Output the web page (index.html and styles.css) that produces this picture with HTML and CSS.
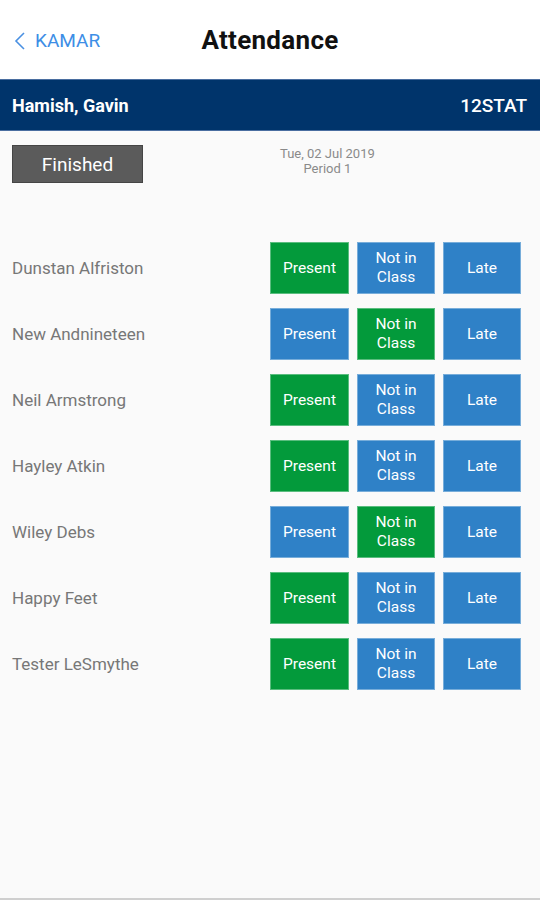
FILE: index.html
```html
<!DOCTYPE html>
<html>
<head>
<meta charset="utf-8">
<link rel="stylesheet" href="styles.css">
</head>
<body>
<div class="app">
  <header class="topbar">
    <a class="back">
      <svg class="chev" width="12" height="20" viewBox="0 0 12 20"><path d="M10 2 L2 10 L10 18" fill="none" stroke="#4a90e2" stroke-width="1.6"/></svg>
      <span>KAMAR</span>
    </a>
    <h1 class="title">Attendance</h1>
  </header>
  <div class="classbar">
    <span class="teacher">Hamish, Gavin</span>
    <span class="code">12STAT</span>
  </div>
  <div class="info">
    <button class="finished">Finished</button>
    <div class="date">
      <div>Tue, 02 Jul 2019</div>
      <div>Period 1</div>
    </div>
  </div>
  <div class="list">
    <div class="row"><span class="name">Dunstan Alfriston</span><div class="btns"><div class="b green">Present</div><div class="b blue">Not in<br>Class</div><div class="b blue">Late</div></div></div>
    <div class="row"><span class="name">New Andnineteen</span><div class="btns"><div class="b blue">Present</div><div class="b green">Not in<br>Class</div><div class="b blue">Late</div></div></div>
    <div class="row"><span class="name">Neil Armstrong</span><div class="btns"><div class="b green">Present</div><div class="b blue">Not in<br>Class</div><div class="b blue">Late</div></div></div>
    <div class="row"><span class="name">Hayley Atkin</span><div class="btns"><div class="b green">Present</div><div class="b blue">Not in<br>Class</div><div class="b blue">Late</div></div></div>
    <div class="row"><span class="name">Wiley Debs</span><div class="btns"><div class="b blue">Present</div><div class="b green">Not in<br>Class</div><div class="b blue">Late</div></div></div>
    <div class="row"><span class="name">Happy Feet</span><div class="btns"><div class="b green">Present</div><div class="b blue">Not in<br>Class</div><div class="b blue">Late</div></div></div>
    <div class="row"><span class="name">Tester LeSmythe</span><div class="btns"><div class="b green">Present</div><div class="b blue">Not in<br>Class</div><div class="b blue">Late</div></div></div>
  </div>
</div>
</body>
</html>
```
FILE: styles.css
```css
* { box-sizing: border-box; }
html, body { margin: 0; padding: 0; }
body {
  width: 540px;
  height: 900px;
  background: #fafafa;
  font-family: Roboto, "Liberation Sans", sans-serif;
  overflow: hidden;
}
.app {
  height: 900px;
  display: flex;
  flex-direction: column;
  border-bottom: 2px solid #cfcfcf;
}
.topbar {
  height: 79px;
  background: #ffffff;
  display: flex;
  align-items: center;
  justify-content: center;
  position: relative;
}
.back {
  position: absolute;
  left: 14px;
  top: 29px;
  display: flex;
  align-items: center;
  gap: 9px;
  color: #3d8ee6;
  font-size: 19px;
}
.chev { display: block; }
.title {
  margin: 0;
  font-size: 26px;
  font-weight: 700;
  color: #111;
  letter-spacing: 0.3px;
}
.classbar {
  height: 52px;
  background: #00346b;
  border-top: 1px solid #4a6ea0;
  border-bottom: 1px solid #4a6ea0;
  display: flex;
  align-items: center;
  justify-content: space-between;
  padding: 0 13px 0 12px;
  color: #fff;
  font-size: 18px;
}
.teacher { font-weight: 700; }
.code { font-weight: 500; font-size: 19px; }
.info {
  display: flex;
  align-items: flex-start;
  padding: 14px 12px 0;
  height: 111px;
}
.finished {
  width: 131px;
  height: 38px;
  background: #5b5b5b;
  border: 1px solid #454545;
  color: #fff;
  font-family: Roboto, "Liberation Sans", sans-serif;
  font-size: 19px;
  font-weight: 400;
  padding: 0;
}
.date {
  margin-left: 137px;
  margin-top: 1px;
  text-align: center;
  font-size: 13px;
  line-height: 15px;
  color: #8a8a8a;
}
.list {
  display: flex;
  flex-direction: column;
  gap: 14px;
  padding: 0 19px 0 12px;
}
.row {
  display: flex;
  align-items: center;
  justify-content: space-between;
  height: 52px;
}
.name {
  font-size: 17px;
  color: #777;
}
.btns {
  display: grid;
  grid-template-columns: 79px 78px 78px;
  column-gap: 8px;
}
.b {
  height: 52px;
  display: flex;
  align-items: center;
  justify-content: center;
  text-align: center;
  color: #fff;
  font-size: 15.5px;
  line-height: 19px;
  border: 1px solid rgba(255,255,255,0.35);
}
.green { background: #039a3b; }
.blue { background: #2f81c7; }
```
